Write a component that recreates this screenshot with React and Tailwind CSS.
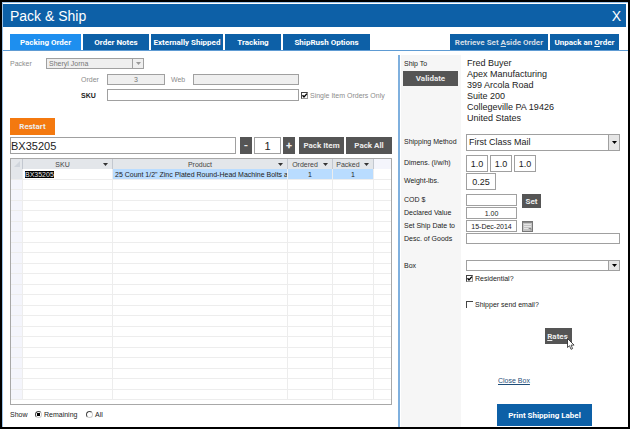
import React, { useState } from 'react';

const tabs = ['Packing Order', 'Order Notes', 'Externally Shipped', 'Tracking', 'ShipRush Options'];
const tabWidths = ['w-[71px]', 'w-[66px]', 'w-[72px]', 'w-[56px]', 'w-[87px]'];

const items = [
    { sku: 'BX35205', product: '25 Count 1/2" Zinc Plated Round-Head Machine Bolts a', ordered: 1, packed: 1 },
];
const EMPTY_ROWS = 21;

const address = ['Fred Buyer', 'Apex Manufacturing', '399 Arcola Road', 'Suite 200', 'Collegeville PA 19426', 'United States'];

const blueButton = "bg-[#0d60a7] font-['Roboto'] text-[8px] font-bold text-white whitespace-nowrap";
const darkButton = "bg-[#555555] font-['Roboto'] text-[8px] font-bold text-[#ececec] whitespace-nowrap";
const field = 'border border-[#a0a0a0] bg-white text-[#222222]';

function Arrow({ className = '' }) {
    return (
        <svg viewBox="0 0 5 3" className={`w-[5px] h-[3px] ${className}`} fill="currentColor">
            <path d="M0 0h5L2.5 3z" />
        </svg>
    );
}

// Select with its own square drop-down button on the right
function DropDown({ id, options, className, buttonClass, disabled }) {
    return (
        <div className={`relative ${className}`}>
            <select
                id={id}
                disabled={disabled}
                className="block w-full h-full appearance-none border border-[#a0a0a0] bg-transparent pl-[2px] pr-3 opacity-100"
            >
                {options.map(option => (
                    <option key={option}>{option}</option>
                ))}
            </select>
            <span className={`pointer-events-none absolute right-0 inset-y-0 w-3 border border-[#a0a0a0] flex items-center justify-center ${buttonClass}`}>
                <Arrow />
            </span>
        </div>
    );
}

function CheckBox({ id, defaultChecked }) {
    return (
        <span className="relative block size-[7px] shrink-0">
            <input
                id={id}
                type="checkbox"
                defaultChecked={defaultChecked}
                className="peer block size-[7px] appearance-none border-t border-l border-[#444444] bg-white checked:border-r checked:border-b checked:border-r-[#999999] checked:border-b-[#999999]"
            />
            <svg viewBox="0 0 7 7" className="pointer-events-none absolute inset-0 hidden size-[7px] peer-checked:block" fill="none" stroke="#000" strokeWidth="1.4">
                <path d="M1.5 3.2L3 5l3-3.4" />
            </svg>
        </span>
    );
}

function Radio({ id, checked, onChange }) {
    return (
        <input
            id={id}
            type="radio"
            name="show"
            checked={checked}
            onChange={onChange}
            className="block size-[7px] shrink-0 appearance-none rounded-full border border-[#cccccc] border-t-[#444444] border-l-[#444444] bg-white checked:bg-[radial-gradient(#000_40%,#fff_50%)]"
        />
    );
}

function Row({ label, htmlFor, className = '', tall, children }) {
    return (
        <div className={`flex ${className}`}>
            <div className="w-[60px] shrink-0 bg-[#f6f6f6] pl-[3px]">
                {label && (
                    <label htmlFor={htmlFor} className={`block leading-[8px] whitespace-nowrap ${tall ? 'pt-1' : 'pt-[2px]'}`}>{label}</label>
                )}
            </div>
            <div className="flex-1 min-w-0 pl-[5px] pr-[8px]">{children}</div>
        </div>
    );
}

function Header() {
    return (
        <header className="flex items-center justify-between h-[23px] mt-px mr-[2px] pl-[7px] pr-[5px] bg-[#0d60a7] text-white">
            <h1 className="text-[14px] leading-none">Pack &amp; Ship</h1>
            <button type="button" aria-label="Close" className="text-[14px] leading-none">X</button>
        </header>
    );
}

function TabBar({ active, onSelect }) {
    return (
        <nav className="flex justify-between mt-[7px] pl-[7px] pr-[9px] border-b border-[#5e9bd3]">
            <div className="flex gap-[2px]">
                {tabs.map((tab, i) => (
                    <button
                        key={tab}
                        type="button"
                        onClick={() => onSelect(tab)}
                        className={`h-4 text-center ${blueButton} ${tabWidths[i]} ${active === tab ? 'bg-[#1e8fef]!' : ''}`}
                    >
                        {tab}
                    </button>
                ))}
            </div>
            <div className="flex gap-[2px]">
                <button type="button" className={`h-4 w-[98px] ${blueButton} text-[#d5dde5]!`}>Retrieve Set <u>A</u>side Order</button>
                <button type="button" className={`h-4 w-[69px] ${blueButton}`}>Unpack an <u>O</u>rder</button>
            </div>
        </nav>
    );
}

function OrderForm() {
    return (
        <div>
            <div className="flex items-center text-[#8c8c8c]">
                <label htmlFor="packer" className="w-9">Packer</label>
                <DropDown id="packer" options={['Sheryl Jorna']} disabled className="w-[98px] h-[11px] bg-[#efefef] text-[#777777]" buttonClass="bg-[#efefef] text-[#999999]" />
            </div>
            <div className="mt-[5px] flex items-center pl-[71px] text-[#8c8c8c]">
                <label htmlFor="order" className="w-[26px]">Order</label>
                <input id="order" readOnly defaultValue="3" className={`w-[58px] h-[11px] text-center ${field} bg-[#efefef]! text-[#777777]!`} />
                <label htmlFor="web" className="w-[28px] pl-[6px]">Web</label>
                <input id="web" readOnly className={`w-[106px] h-[11px] ${field} bg-[#efefef]!`} />
            </div>
            <div className="mt-1 flex items-center pl-[71px]">
                <label htmlFor="sku" className="w-[26px] font-bold">SKU</label>
                <input id="sku" className={`w-[192px] h-3 ${field}`} />
                <div className="ml-[2px] flex items-center gap-[2px] text-[#8c8c8c]">
                    <CheckBox id="single" defaultChecked />
                    <label htmlFor="single" className="whitespace-nowrap">Single Item Orders Only</label>
                </div>
            </div>
        </div>
    );
}

function PackBar() {
    return (
        <div className="mt-[2px] flex h-[17px] text-[11px]">
            <input aria-label="Item" defaultValue="BX35205" className={`flex-1 min-w-0 ${field}`} />
            <button type="button" className={`ml-1 w-[12px] ${darkButton} text-[11px]!`}>-</button>
            <input aria-label="Quantity" defaultValue="1" className={`mx-[2px] w-[27px] text-center ${field}`} />
            <button type="button" className={`w-[12px] ${darkButton} text-[11px]!`}>+</button>
            <button type="button" className={`ml-1 w-[45px] ${darkButton}`}>Pack Item</button>
            <button type="button" className={`ml-[2px] w-[46px] ${darkButton}`}>Pack All</button>
        </div>
    );
}

function HeadCell({ children, className }) {
    return (
        <th className={`relative border-r border-[#c3c8d0] p-0 font-normal text-[#444444] ${className}`}>
            {children}
            <Arrow className="absolute right-1 top-1 text-[#333333]" />
        </th>
    );
}

function ItemTable() {
    const cell = 'border-r border-b border-[#ededed] p-0';
    return (
        <div className="mt-1 h-[247px] overflow-hidden border border-[#a8a8a8]">
            <table className="w-full table-fixed border-separate border-spacing-0 leading-[9px]">
                <thead>
                    <tr className="h-[10px] bg-[#e3e6ea]">
                        <th className="w-3 border-r border-[#c3c8d0] p-0">
                            <svg viewBox="0 0 8 6" className="ml-[2px] h-[6px] w-2" fill="#d0d5dc">
                                <path d="M7 0v6H1z" />
                            </svg>
                        </th>
                        <HeadCell className="w-[90px] pr-[10px]!">SKU</HeadCell>
                        <HeadCell>Product</HeadCell>
                        <HeadCell className="w-[45px] pr-[10px]!">Ordered</HeadCell>
                        <HeadCell className="w-[41px] pr-[10px]!">Packed</HeadCell>
                        <th className="w-[17px] bg-[#f4f5fc] p-0" />
                    </tr>
                </thead>
                <tbody>
                    {items.map(item => (
                        <tr key={item.sku} className="h-[11px]">
                            <td className={`${cell} bg-[#e3e6ea]`} />
                            <td className={`${cell} pl-[2px]`}>
                                <span className="bg-black text-[#e8e8e8]">{item.sku}</span>
                            </td>
                            <td className={`${cell} overflow-hidden whitespace-nowrap bg-[#b9dcff] pl-[2px]`}>{item.product}</td>
                            <td className={`${cell} bg-[#b9dcff] text-center`}>{item.ordered}</td>
                            <td className={`${cell} bg-[#b9dcff] text-center`}>{item.packed}</td>
                            <td className="border-b border-[#ededed] p-0" />
                        </tr>
                    ))}
                    {Array.from({ length: EMPTY_ROWS }, (_, i) => (
                        <tr key={i} className={i % 2 ? 'h-[11px]' : 'h-[10px]'}>
                            <td className={`${cell} bg-[#f4f5fc]`} />
                            <td className={cell} />
                            <td className={cell} />
                            <td className={cell} />
                            <td className={cell} />
                            <td className="border-b border-[#ededed] p-0" />
                        </tr>
                    ))}
                </tbody>
            </table>
        </div>
    );
}

function ShowFilter() {
    const [show, setShow] = useState('Remaining');
    return (
        <div className="mt-[5px] flex items-center">
            <span className="w-[25px]">Show</span>
            <Radio id="remaining" checked={show === 'Remaining'} onChange={() => setShow('Remaining')} />
            <label htmlFor="remaining" className="w-11 pl-[2px]">Remaining</label>
            <Radio id="all" checked={show === 'All'} onChange={() => setShow('All')} />
            <label htmlFor="all" className="pl-[2px]">All</label>
        </div>
    );
}

function Calendar() {
    return (
        <svg viewBox="0 0 11 11" className="size-[11px]">
            <rect x="0.5" y="0.5" width="10" height="10" fill="#c4c4c4" stroke="#777777" />
            <path d="M1 1.5h9" stroke="#8a8a8a" />
            <path d="M2 3.5h7M2 5.5h7M2 7.5h4" stroke="#e6e6e6" />
            <path d="M7 7.5h2v2" stroke="#888888" fill="none" />
        </svg>
    );
}

function Shipping() {
    return (
        <section className="mt-1 flex w-[230px] shrink-0 flex-col border-l-2 border-[#7fb0de] pl-px">
            <div className="flex h-[79px]">
                <div className="w-[60px] shrink-0 bg-[#f6f6f6] pl-[2px] pr-[3px]">
                    <p className="pt-1 pb-[3px] pl-px">Ship To</p>
                    <button type="button" className={`block h-[15px] w-full ${darkButton}`}>Validate</button>
                </div>
                <address className="pl-[6px] pt-[3px] text-[9px] leading-[11px] not-italic">
                    {address.map(line => (
                        <div key={line}>{line}</div>
                    ))}
                </address>
            </div>
            <Row label="Shipping Method" htmlFor="method" tall className="h-[21px]">
                <DropDown id="method" options={['First Class Mail']} className="h-[17px] text-[9px]" buttonClass="bg-[#e6e6e6] text-black" />
            </Row>
            <Row label="Dimens. (l/w/h)" htmlFor="length" tall className="h-[18px]">
                <div className="flex gap-[2px] text-[9px]">
                    <input id="length" defaultValue="1.0" className={`h-[17px] w-[22px] text-center ${field}`} />
                    <input aria-label="Width" defaultValue="1.0" className={`h-[17px] w-[22px] text-center ${field}`} />
                    <input aria-label="Height" defaultValue="1.0" className={`h-[17px] w-[22px] text-center ${field}`} />
                </div>
            </Row>
            <Row label="Weight-lbs." htmlFor="weight" tall className="h-[21px]">
                <input id="weight" defaultValue="0.25" className={`block h-[17px] w-[30px] text-center text-[9px] ${field}`} />
            </Row>
            <Row label="COD $" htmlFor="cod" className="h-[13px]">
                <div className="flex items-start gap-[5px]">
                    <input id="cod" className={`h-3 w-[51px] ${field}`} />
                    <button type="button" className={`-mb-1 h-[14px] w-[19px] ${darkButton}`}>Set</button>
                </div>
            </Row>
            <Row label="Declared Value" htmlFor="declared" className="h-[13px]">
                <input id="declared" defaultValue="1.00" className={`block h-3 w-[51px] text-center ${field}`} />
            </Row>
            <Row label="Set Ship Date to" htmlFor="date" className="h-[13px]">
                <div className="flex gap-[5px]">
                    <input id="date" defaultValue="15-Dec-2014" className={`h-3 w-[51px] text-center ${field}`} />
                    <button type="button" aria-label="Pick date"><Calendar /></button>
                </div>
            </Row>
            <Row label="Desc. of Goods" htmlFor="goods" className="h-[27px]">
                <input id="goods" className={`block h-[11px] w-full ${field}`} />
            </Row>
            <Row label="Box" htmlFor="box" className="h-[14px]">
                <DropDown id="box" options={['']} className="h-[11px]" buttonClass="bg-[#e6e6e6] text-black" />
            </Row>
            <Row className="flex-1">
                <div className="flex items-center gap-[2px]">
                    <CheckBox id="residential" defaultChecked />
                    <label htmlFor="residential">Residential?</label>
                </div>
                <div className="mt-[17px] flex items-center gap-[2px]">
                    <CheckBox id="email" />
                    <label htmlFor="email">Shipper send email?</label>
                </div>
                <div className="relative mt-[19px] ml-[79px] w-[27px]">
                    <button type="button" className={`block h-4 w-full pr-[2px] ${darkButton}`}><u>R</u>ates</button>
                    <svg viewBox="0 0 8 12" className="absolute left-[22px] top-[10px] h-3 w-2" fill="#fff" stroke="#222222" strokeWidth="0.8">
                        <path d="M0.5 0.5v9l2-1.8 1.5 3.6 1.6-0.7-1.5-3.5h3z" />
                    </svg>
                </div>
                <div className="mt-8 ml-8">
                    <a href="#close" className="text-[#1f4e79] underline">Close Box</a>
                </div>
                <button type="button" className={`mt-[19px] ml-[31px] block h-[22px] w-[95px] ${blueButton}`}>Print Shipping Label</button>
            </Row>
        </section>
    );
}

function App() {
    const [active, setActive] = useState('Packing Order');

    return (
        <div className="min-h-screen bg-black p-[2px] flex font-['Liberation_Sans',sans-serif] text-[7px] leading-[9px] text-[#222222]">
            <div className="flex flex-1 flex-col border-t border-l border-[#9cc3e8] bg-white">
                <Header />
                <TabBar active={active} onSelect={setActive} />
                <main className="flex flex-1">
                    <div className="min-w-0 flex-1 pt-[7px] pl-[7px] pr-[6px]">
                        <OrderForm />
                        <button type="button" className={`mt-[17px] block h-[17px] w-[45px] ${darkButton} bg-[#f4790f]!`}>Restart</button>
                        <PackBar />
                        <ItemTable />
                        <ShowFilter />
                    </div>
                    <Shipping />
                </main>
            </div>
        </div>
    );
}

export default App;
